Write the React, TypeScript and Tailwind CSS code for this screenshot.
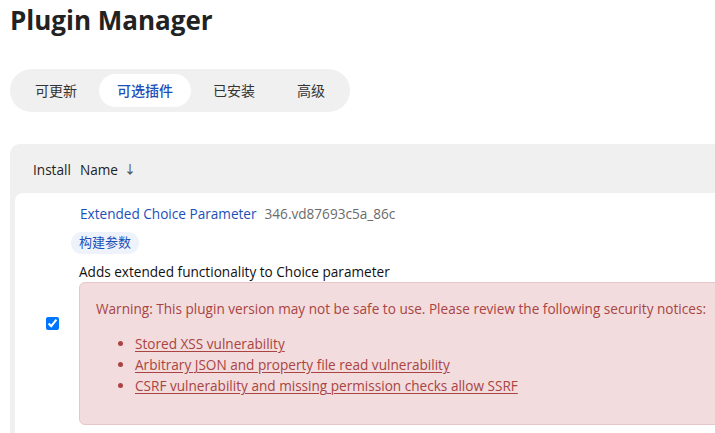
import React from "react"

const tabs = ["可更新", "可选插件", "已安装", "高级"]

const notices = [
  "Stored XSS vulnerability",
  "Arbitrary JSON and property file read vulnerability",
  "CSRF vulnerability and missing permission checks allow SSRF",
]

export default function App() {
  return (
    <div className="w-[715px] h-[433px] overflow-hidden bg-white text-[#1a1a1a] font-['Open_Sans','Noto_Sans_CJK_SC',sans-serif]">
      <h1 className="pl-[10px] pt-[3px] text-[26px] leading-[34px] font-bold text-[#222]">Plugin Manager</h1>

      {/* tabs */}
      <div className="ml-[10px] mt-[32px] inline-flex items-center gap-0.5 rounded-full bg-[#f0f0f0] p-[5px] text-[14px]">
        {tabs.map((t, i) => (
          <div
            key={t}
            className={`h-[33px] flex items-center rounded-full ${
              i === 1 ? "px-[18px] bg-white text-[#1d4fb8] font-medium" : "px-5 text-[#333]"
            }`}
          >
            {t}
          </div>
        ))}
      </div>

      {/* table */}
      <div className="ml-[10px] mt-[32px] w-[900px] rounded-tl-[10px] bg-[#f0f0f0] pl-[5px]">
        <div className="h-[49px] pt-[3px] flex items-center text-[13.6px] font-medium text-[#222]">
          <div className="w-[65px] pl-[18px]">Install</div>
          <div className="flex items-center gap-1.5">
            Name <span className="text-[12px] text-[#555]">↓</span>
          </div>
        </div>

        <div className="flex h-[261px] rounded-tl-[8px] bg-white">
          <div className="w-[65px] flex items-center justify-center pl-[10px]">
            <input type="checkbox" defaultChecked className="w-[13px] h-[13px] accent-[#0075ff]" />
          </div>
          <div className="flex-1 pt-[11px] text-[13.6px]">
            <div className="flex h-[20px] items-baseline gap-2 leading-[20px]">
              <a className="text-[#1d4fb8] font-medium">Extended Choice Parameter</a>
              <span className="text-[#6b6b6b]">346.vd87693c5a_86c</span>
            </div>
            <div className="mt-[8px] h-[22px] -ml-[9px] flex">
              <span className="inline-flex h-[22px] items-center rounded-full bg-[#eef3fb] px-2 text-[13px] text-[#1d4fb8]">构建参数</span>
            </div>
            <p className="mt-[8px] -ml-px leading-[20px] text-[#111]">Adds extended functionality to Choice parameter</p>
            <div className="-ml-px h-[143px] rounded-md border border-[#e9c6c9] bg-[#f2dcde] pl-[16px] pt-[16px] text-[#a94442]">
              <p className="leading-[20px]">Warning: This plugin version may not be safe to use. Please review the following security notices:</p>
              <ul className="mt-[14px] list-disc pl-[39px] marker:text-[#a94442]">
                {notices.map((n) => (
                  <li key={n} className="leading-[21px]">
                    <a className="underline underline-offset-2">{n}</a>
                  </li>
                ))}
              </ul>
            </div>
          </div>
        </div>
      </div>
    </div>
  )
}
